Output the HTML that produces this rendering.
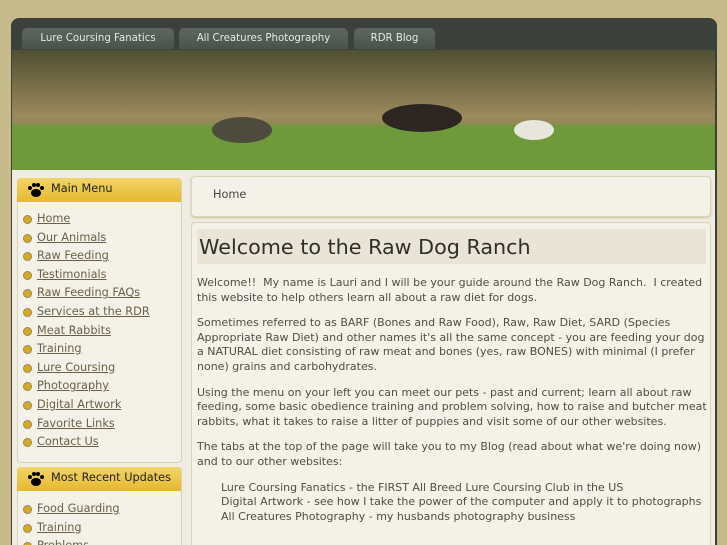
<!DOCTYPE html>
<html style="width:727px;height:545px;overflow:hidden"><head><style>
body{margin:0;width:727px;height:545px;overflow:hidden;background:#c8bb8b;font-family:"DejaVu Sans","Liberation Sans",sans-serif;position:relative}
.frame{position:absolute;left:11px;top:18px;width:706px;height:527px;background:#3c403a;border-radius:8px 8px 0 0}
.tab{position:absolute;top:28px;height:21px;background:linear-gradient(#5d665f,#4a524c);border-radius:5px 5px 0 0;color:#e6e9e2;font-size:10.2px;line-height:22px;text-align:center}
.banner{position:absolute;left:12px;top:50px;width:703px;height:120px;overflow:hidden}
.body{position:absolute;left:12px;top:170px;width:703px;height:375px;background:#efece1}
.box{position:absolute;background:#f3f1e8;border:1px solid #d8d2b8;border-radius:4px}
.hdr{position:absolute;left:17px;width:164px;height:24px;background:linear-gradient(#f2d56a,#e5b92c);border-radius:4px 4px 0 0;font-size:11.3px;line-height:21px;color:#222;white-space:nowrap}
.paw{position:absolute;left:10px;top:3px;width:18px;height:18px}
ul{list-style:none;margin:0;padding:0;position:absolute;left:23px}
li{height:18.6px;font-size:11.3px;color:#6a6148;text-decoration:underline;padding-left:14px;position:relative}
li:before{content:"";position:absolute;left:0;top:3px;width:9px;height:9px;border-radius:50%;background:#d8a820;border:1px solid #9a8a50;box-sizing:border-box}
p{margin:0 0 11px;font-size:11px;line-height:14.6px;color:#4f4f44}
</style></head><body>
<div class="frame"></div>
<div class="tab" style="left:22px;width:152px">Lure Coursing Fanatics</div>
<div class="tab" style="left:179px;width:169px">All Creatures Photography</div>
<div class="tab" style="left:354px;width:81px">RDR Blog</div>
<div class="banner">
<svg width="703" height="120" style="position:absolute;left:0;top:0">
<defs><linearGradient id="g" x1="0" y1="0" x2="0" y2="1"><stop offset="0" stop-color="#4f5034"/><stop offset="0.3" stop-color="#7a6e48"/><stop offset="0.55" stop-color="#9c8a5e"/><stop offset="0.7" stop-color="#7f8a48"/></linearGradient></defs>
<rect x="0" y="0" width="703" height="120" fill="url(#g)"/>
<rect x="0" y="75" width="703" height="45" fill="#6e9a3c"/>
<ellipse cx="230" cy="80" rx="30" ry="13" fill="#4d4a3e"/>
<ellipse cx="410" cy="68" rx="40" ry="14" fill="#2e2620"/>
<ellipse cx="522" cy="80" rx="20" ry="10" fill="#e8e6dc"/>
</svg></div>
<div class="body"></div>
<div class="box" style="left:17px;top:178px;width:163px;height:283px"></div>
<div class="hdr" style="top:178px"><svg class="paw" viewBox="0 0 18 18"><ellipse cx="9" cy="12" rx="5" ry="4"/><circle cx="3" cy="7" r="2"/><circle cx="7" cy="4" r="2"/><circle cx="11" cy="4" r="2"/><circle cx="15" cy="7" r="2"/></svg><span style="position:absolute;left:34px">Main Menu</span></div>
<ul style="top:212px"><li>Home</li><li>Our Animals</li><li>Raw Feeding</li><li>Testimonials</li><li>Raw Feeding FAQs</li><li>Services at the RDR</li><li>Meat Rabbits</li><li>Training</li><li>Lure Coursing</li><li>Photography</li><li>Digital Artwork</li><li>Favorite Links</li><li>Contact Us</li></ul>
<div class="box" style="left:17px;top:467px;width:163px;height:100px"></div>
<div class="hdr" style="top:467px"><svg class="paw" viewBox="0 0 18 18"><ellipse cx="9" cy="12" rx="5" ry="4"/><circle cx="3" cy="7" r="2"/><circle cx="7" cy="4" r="2"/><circle cx="11" cy="4" r="2"/><circle cx="15" cy="7" r="2"/></svg><span style="position:absolute;left:34px">Most Recent Updates</span></div>
<ul style="top:502px"><li>Food Guarding</li><li>Training</li><li>Problems</li></ul>
<div class="box" style="left:191px;top:176px;width:518px;height:39px;box-shadow:0 1px 2px #ccc4a4"><span style="position:absolute;left:21px;top:11px;font-size:11.3px;color:#444">Home</span></div>
<div class="box" style="left:191px;top:222px;width:518px;height:340px">
<div style="position:absolute;left:5px;top:6px;width:507px;height:35px;background:#e9e4d6;font-size:20.7px;line-height:36px;color:#2e2e2a;padding-left:2px">Welcome to the Raw Dog Ranch</div>
<div style="position:absolute;left:5px;top:53px;width:510px">
<p>Welcome!!&nbsp; My name is Lauri and I will be your guide around the Raw Dog Ranch.&nbsp; I created this website to help others learn all about a raw diet for dogs.</p>
<p>Sometimes referred to as BARF (Bones and Raw Food), Raw, Raw Diet, SARD (Species Appropriate Raw Diet) and other names it's all the same concept - you are feeding your dog a NATURAL diet consisting of raw meat and bones (yes, raw BONES) with minimal (I prefer none) grains and carbohydrates.</p>
<p>Using the menu on your left you can meet our pets - past and current; learn all about raw feeding, some basic obedience training and problem solving, how to raise and butcher meat rabbits, what it takes to raise a litter of puppies and visit some of our other websites.</p>
<p>The tabs at the top of the page will take you to my Blog (read about what we're doing now) and to our other websites:</p>
<p style="padding-left:24px;white-space:nowrap">Lure Coursing Fanatics - the FIRST All Breed Lure Coursing Club in the US<br>Digital Artwork - see how I take the power of the computer and apply it to photographs<br>All Creatures Photography - my husbands photography business</p>
</div></div>
</body></html>
